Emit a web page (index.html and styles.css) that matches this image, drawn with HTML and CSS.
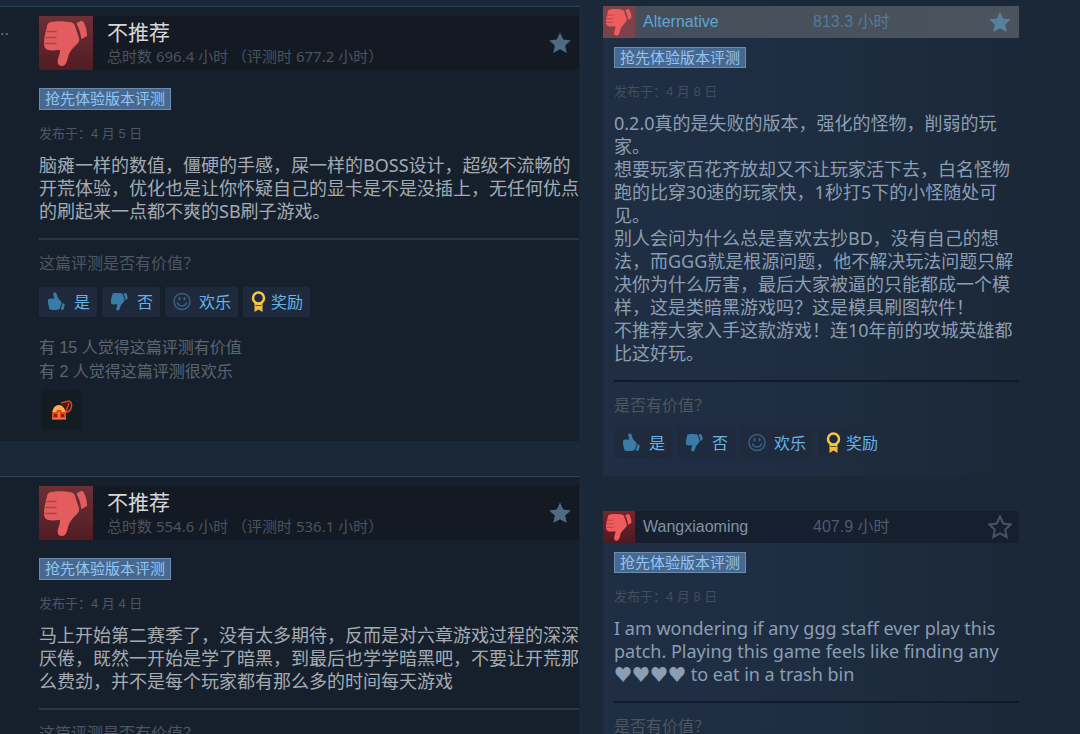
FILE: index.html
```html
<!DOCTYPE html>
<html lang="zh-CN">

<head>
    <meta charset="UTF-8">
    <meta name="viewport" content="width=device-width, initial-scale=1.0">
    <title>评测</title>
    <link rel="stylesheet" href="styles.css">
</head>

<body>
    <!-- shared icons -->
    <svg class="icon-defs" aria-hidden="true">
        <symbol id="thumb-down" viewBox="0 0 54 54">
            <path d="M12 6C17 5 25 5 30 6C33 6 35 7 36 10L40 22C41 26 38 28 36 30C32 34 30 37 29 41C28 45 27 50 23 50C19 50 18 47 19 43C20 40 21 37 21 34C17 34 13 35 9 34C6 33 5 31 5 28C5 23 6 17 8 11C8 8 9 7 12 6Z" />
            <path d="M38 7L42 5C43 5 44 5 45 7C47 11 48 15 48 19C48 20 47 21 46 21L43 23C42 23 42 22 42 21C41 16 40 12 38 9Z" />
        </symbol>
        <symbol id="grooves" viewBox="0 0 54 54">
            <path d="M8 15.5H17M7 21.5H17M6 27.5H17" fill="none" stroke="#a8454a" stroke-width="1.5" stroke-linecap="round" />
        </symbol>
        <symbol id="star" viewBox="0 0 24 24">
            <path d="M12 1.5L15.2 8.5L22.8 9.4L17.2 14.6L18.7 22L12 18.3L5.3 22L6.8 14.6L1.2 9.4L8.8 8.5Z" />
        </symbol>
        <symbol id="smile" viewBox="0 0 20 20">
            <circle cx="10" cy="10" r="8" fill="none" stroke="currentColor" stroke-width="1.5" />
            <path d="M7.5 6.5V8M12.5 6.5V8" stroke="currentColor" stroke-width="2" stroke-linecap="round" />
            <path d="M5.5 11.5C7 15.5 13 15.5 14.5 11.5" fill="none" stroke="currentColor" stroke-width="1.5" stroke-linecap="round" />
        </symbol>
        <symbol id="ribbon" viewBox="0 0 20 24">
            <path d="M6 14H14V23L10 20.500L6 23Z" fill="#f0bd42" />
            <path d="M7 16.500H13" stroke="#5a4c35" stroke-width="1" />
            <circle cx="10" cy="9" r="5.500" fill="#1f2a3c" stroke="#fac83c" stroke-width="2.500" />
        </symbol>
    </svg>

    <main class="reviews">
        <section class="column">
            <article class="review">
                <div class="author">..</div>
                <div class="content">
                    <header class="review-header">
                        <svg class="thumb" aria-hidden="true"><use href="#thumb-down" /><use href="#grooves" /></svg>
                        <div class="heading">
                            <h2>不推荐</h2>
                            <p>总时数 696.4 小时 （评测时 677.2 小时）</p>
                        </div>
                        <svg class="star" aria-hidden="true"><use href="#star" /></svg>
                    </header>
                    <span class="tag">抢先体验版本评测</span>
                    <p class="date">发布于：4 月 5 日</p>
                    <p class="text">脑瘫一样的数值，僵硬的手感，屎一样的BOSS设计，超级不流畅的<br>开荒体验，优化也是让你怀疑自己的显卡是不是没插上，无任何优点<br>的刷起来一点都不爽的SB刷子游戏。</p>
                    <div class="vote">
                        <p class="question">这篇评测是否有价值？</p>
                        <div class="buttons">
                            <button type="button"><svg class="flip" aria-hidden="true"><use href="#thumb-down" /></svg>是</button>
                            <button type="button"><svg aria-hidden="true"><use href="#thumb-down" /></svg>否</button>
                            <button type="button"><svg class="smile" aria-hidden="true"><use href="#smile" /></svg>欢乐</button>
                            <button type="button" class="award"><svg aria-hidden="true"><use href="#ribbon" /></svg>奖励</button>
                        </div>
                        <p class="stats">有 15 人觉得这篇评测有价值<br>有 2 人觉得这篇评测很欢乐</p>
                        <div class="reaction">
                            <svg viewBox="0 0 22 20" aria-hidden="true">
                                <path d="M5 7L14 2L18 2L15 12L9 9Z" fill="#4b1714" />
                                <path d="M10 3L18 1C22 2 21 10 17 12L15 12L18 3" fill="none" stroke="#d9431f" stroke-width="1.500" />
                                <path d="M1 13C2 7 5 5 8 5C11 5 14 8 15 13Z" fill="#ffad4d" />
                                <path d="M1 12H5L6 10H10L11 12H15V19H1Z" fill="#e7471f" />
                                <path d="M3 14H6V17H3ZM10 14H13V17H10Z" fill="#8d1d12" />
                                <path d="M1 19H15M8 12V18" stroke="#ff9a62" stroke-width="1" />
                            </svg>
                        </div>
                    </div>
                </div>
            </article>

            <article class="review">
                <div class="author"></div>
                <div class="content">
                    <header class="review-header">
                        <svg class="thumb" aria-hidden="true"><use href="#thumb-down" /><use href="#grooves" /></svg>
                        <div class="heading">
                            <h2>不推荐</h2>
                            <p>总时数 554.6 小时 （评测时 536.1 小时）</p>
                        </div>
                        <svg class="star" aria-hidden="true"><use href="#star" /></svg>
                    </header>
                    <span class="tag">抢先体验版本评测</span>
                    <p class="date">发布于：4 月 4 日</p>
                    <p class="text">马上开始第二赛季了，没有太多期待，反而是对六章游戏过程的深深<br>厌倦，既然一开始是学了暗黑，到最后也学学暗黑吧，不要让开荒那<br>么费劲，并不是每个玩家都有那么多的时间每天游戏</p>
                    <div class="vote">
                        <p class="question">这篇评测是否有价值？</p>
                    </div>
                </div>
            </article>
        </section>

        <section class="column">
            <article class="recent">
                <header class="recent-header active">
                    <svg class="thumb" aria-hidden="true"><use href="#thumb-down" /><use href="#grooves" /></svg>
                    <a class="name" href="#">Alternative</a>
                    <a class="hours" href="#">813.3 小时</a>
                    <svg class="star" aria-hidden="true"><use href="#star" /></svg>
                </header>
                <div class="recent-body">
                    <span class="tag">抢先体验版本评测</span>
                    <p class="date">发布于：4 月 8 日</p>
                    <p class="text">0.2.0真的是失败的版本，强化的怪物，削弱的玩<br>家。<br>想要玩家百花齐放却又不让玩家活下去，白名怪物<br>跑的比穿30速的玩家快，1秒打5下的小怪随处可<br>见。<br>别人会问为什么总是喜欢去抄BD，没有自己的想<br>法，而GGG就是根源问题，他不解决玩法问题只解<br>决你为什么厉害，最后大家被逼的只能都成一个模<br>样，这是类暗黑游戏吗？这是模具刷图软件！<br>不推荐大家入手这款游戏！连10年前的攻城英雄都<br>比这好玩。</p>
                    <div class="vote">
                        <p class="question">是否有价值？</p>
                        <div class="buttons">
                            <button type="button"><svg class="flip" aria-hidden="true"><use href="#thumb-down" /></svg>是</button>
                            <button type="button"><svg aria-hidden="true"><use href="#thumb-down" /></svg>否</button>
                            <button type="button"><svg class="smile" aria-hidden="true"><use href="#smile" /></svg>欢乐</button>
                            <button type="button" class="award"><svg aria-hidden="true"><use href="#ribbon" /></svg>奖励</button>
                        </div>
                    </div>
                </div>
            </article>

            <article class="recent">
                <header class="recent-header">
                    <svg class="thumb" aria-hidden="true"><use href="#thumb-down" /><use href="#grooves" /></svg>
                    <a class="name" href="#">Wangxiaoming</a>
                    <a class="hours" href="#">407.9 小时</a>
                    <svg class="star outline" aria-hidden="true"><use href="#star" /></svg>
                </header>
                <div class="recent-body">
                    <span class="tag">抢先体验版本评测</span>
                    <p class="date">发布于：4 月 8 日</p>
                    <p class="text">I am wondering if any ggg staff ever play this<br>patch. Playing this game feels like finding any<br>♥♥♥♥ to eat in a trash bin</p>
                    <div class="vote">
                        <p class="question">是否有价值？</p>
                    </div>
                </div>
            </article>
        </section>
    </main>
</body>

</html>
```
FILE: styles.css
```css
* {
    margin: 0;
    padding: 0;
    box-sizing: border-box;
}

body {
    height: 100vh;
    overflow: hidden;
    background-color: #1b2838;
    color: #a5abb2;
    font-family: "Liberation Sans", "Noto Sans CJK SC", sans-serif;
    font-size: 16px;
    text-spacing-trim: space-all;
}

a {
    text-decoration: none;
}

.icon-defs {
    display: block;
    width: 0;
    height: 0;
}

.reviews {
    display: grid;
    grid-template-columns: 580fr 416fr;
    gap: 23px;
    padding: 6px 61px 0 0;
}

.column {
    display: flex;
    flex-direction: column;
    gap: 35px;
    min-width: 0;
}

/* left column */
.review {
    display: grid;
    grid-template-columns: 39px 1fr;
    padding: 9px 0 11px;
    border-top: 1px solid #294459;
    border-right: 1px solid #1a2533;
    background-color: #16202d;
}

.author {
    padding-top: 4px;
    color: #75808c;
    line-height: 20px;
}

.review-header {
    display: flex;
    align-items: center;
    height: 54px;
    margin-bottom: 18px;
    background-color: #131a24;
}

.thumb {
    flex: none;
    width: 54px;
    height: 54px;
    background: linear-gradient(#6c3037, #521c23);
    fill: #e35d5e;
}

.heading {
    flex: 1;
    padding-left: 14px;
}

.heading h2 {
    color: #d6d7d8;
    font-size: 21px;
    font-weight: normal;
    line-height: 26px;
}

.heading p {
    color: #4b535e;
    font-family: "Noto Sans", "Noto Sans CJK SC", sans-serif;
    font-size: 15px;
    line-height: 20px;
}

.star {
    flex: none;
    width: 24px;
    height: 24px;
    margin-right: 7px;
    fill: #4d6b82;
}

.tag {
    display: block;
    width: fit-content;
    padding: 0 5px;
    border: 1px solid #6c8cae;
    background-color: #47698f;
    color: #93c4f3;
    font-size: 15px;
    line-height: 20px;
}

.date {
    margin-top: 14px;
    color: #4d5661;
    font-size: 13px;
    line-height: 20px;
}

.text {
    margin-top: 10px;
    font-family: "Noto Sans", "Noto Sans CJK SC", sans-serif;
    font-size: 18px;
    line-height: 23px;
    white-space: nowrap;
}

.vote {
    margin-top: 15px;
    padding-top: 13px;
    border-top: 2px solid #2b3642;
}

.question {
    color: #4d5661;
    line-height: 22px;
}

.buttons {
    display: flex;
    gap: 5px;
    margin-top: 12px;
}

button {
    display: flex;
    align-items: center;
    gap: 7px;
    height: 30px;
    padding: 0 7px 2px;
    border: none;
    border-radius: 2px;
    background-color: #1e293b;
    color: #64b4e9;
    font-family: inherit;
    font-size: 16px;
    cursor: pointer;
}

button svg {
    width: 21px;
    height: 21px;
    fill: #397ca6;
}

button .flip {
    transform: scaleY(-1);
}

button .smile {
    width: 20px;
    color: #386282;
}

.award {
    gap: 2px;
    padding-left: 5px;
}

.award svg {
    height: 24px;
}

.stats {
    margin-top: 19px;
    color: #5b6570;
    line-height: 24px;
}

.reaction {
    display: flex;
    align-items: center;
    justify-content: center;
    width: 41px;
    height: 41px;
    margin: 5px 0 0 2px;
    border-radius: 5px;
    background-color: #131b23;
}

.reaction svg {
    width: 22px;
    height: 20px;
}

/* right column */
.recent {
    background: linear-gradient(to right, #202e43, #1e2d41 50%, #1b2838);
}

.recent-header {
    display: flex;
    align-items: center;
    height: 32px;
    background-color: #161f2d;
}

.recent-header .thumb {
    width: 32px;
    height: 32px;
    background: linear-gradient(#76252c, #4b1a26);
    fill: #ef5c5e;
}

.recent-header .name {
    flex: 0 0 170px;
    padding-left: 8px;
    color: #8091a3;
    line-height: 24px;
}

.recent-header .hours {
    flex: 1;
    padding-left: 8px;
    color: #4d5c6e;
    line-height: 24px;
}

.recent-header.active {
    background: linear-gradient(to right, #454d5b, #4b535d);
}

.recent-header.active .thumb {
    background: #7b424c;
}

.recent-header.active .name {
    color: #5ca6d2;
}

.recent-header.active .hours {
    color: #527b9c;
}

.recent-header.active .star {
    fill: #597f9f;
}

.recent-header .star.outline {
    fill: none;
    stroke: #465363;
    stroke-width: 2px;
}

.recent-body {
    padding: 9px 0 18px 11px;
}

.recent .tag {
    line-height: 19px;
}

.recent .text {
    color: #8b9eb3;
}

.recent .date {
    color: #414e5e;
}

.recent .vote {
    border-top-color: #101a28;
}

.recent .buttons {
    margin-top: 11px;
}

.recent button {
    background-color: #1f2a3d;
}
```
